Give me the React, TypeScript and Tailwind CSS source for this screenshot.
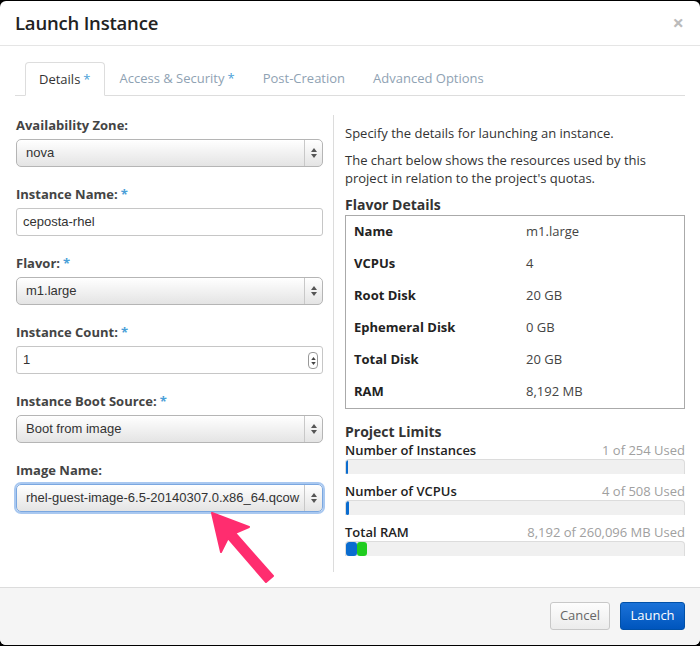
import React from "react";

const Star = () => <span className="text-[#4a9fd8] ml-[3px]">*</span>;

function SelectBox({ value, focused }: { value: string; focused?: boolean }) {
  return (
    <div
      className={
        "relative h-[28px] rounded-[5px] flex items-center bg-gradient-to-b from-[#ffffff] to-[#e4e4e4] " +
        (focused
          ? "border border-[#7aa7e0] shadow-[0_0_0_2px_#a9c8f0]"
          : "border border-[#b5b5b5] shadow-[inset_0_1px_0_#fff]")
      }
    >
      <span className="block w-full min-w-0 pl-[9px] pr-[22px] text-[13px] text-[#333] whitespace-nowrap overflow-hidden font-['Liberation_Sans',Arial,sans-serif]">
        <span className="block overflow-hidden">{value}</span>
      </span>
      <div className="absolute right-0 top-0 bottom-0 w-[18px] border-l border-[#c8c8c8] flex flex-col items-center justify-center gap-[2px]">
        <svg width="6" height="4" viewBox="0 0 6 4"><path d="M3 0 L6 4 L0 4 Z" fill="#555" /></svg>
        <svg width="6" height="4" viewBox="0 0 6 4"><path d="M0 0 L6 0 L3 4 Z" fill="#555" /></svg>
      </div>
    </div>
  );
}

function InputBox({ value, spinner }: { value: string; spinner?: boolean }) {
  return (
    <div className="relative h-[28px] rounded-[3px] border border-[#c6c6c6] bg-white flex items-center">
      <span className="pl-[6px] text-[13px] text-[#333] font-['Liberation_Sans',Arial,sans-serif]">{value}</span>
      {spinner && (
        <div className="absolute right-[4px] top-[5px] w-[10px] h-[17px] rounded-[4px] border border-[#999] flex flex-col items-center justify-center gap-[2px] bg-white">
          <svg width="5" height="3" viewBox="0 0 6 4"><path d="M3 0 L6 4 L0 4 Z" fill="#444" /></svg>
          <svg width="5" height="3" viewBox="0 0 6 4"><path d="M0 0 L6 0 L3 4 Z" fill="#444" /></svg>
        </div>
      )}
    </div>
  );
}

function Field({ label, req, children }: { label: string; req?: boolean; children: React.ReactNode }) {
  return (
    <div className="mb-[17px]">
      <div className="h-[20px] mb-[4px] text-[13px] font-bold text-[#444] leading-[20px]">
        {label}
        {req && <Star />}
      </div>
      {children}
    </div>
  );
}

function Bar({ label, used, fills }: { label: string; used: string; fills: { w: number; c: string }[] }) {
  return (
    <div className="mb-[8px]">
      <div className="flex justify-between h-[18px] leading-[18px] text-[13px]">
        <span className="font-semibold text-[#222]">{label}</span>
        <span className="text-[#a0a0a0]">{used}</span>
      </div>
      <div className="h-[15px] bg-[#f0f0f0] border-t border-x border-[#dcdcdc] rounded-t-[4px] flex overflow-hidden">
        {fills.map((f, i) => (
          <div key={i} className="h-full rounded-[3px]" style={{ width: f.w, backgroundColor: f.c }} />
        ))}
      </div>
    </div>
  );
}

export default function App() {
  const rows: [string, string][] = [
    ["Name", "m1.large"],
    ["VCPUs", "4"],
    ["Root Disk", "20 GB"],
    ["Ephemeral Disk", "0 GB"],
    ["Total Disk", "20 GB"],
    ["RAM", "8,192 MB"],
  ];
  return (
    <div className="w-[700px] h-[646px] bg-black pt-px font-['Open_Sans',sans-serif] relative overflow-hidden">
      <div className="h-[644px] bg-white rounded-[6px] flex flex-col overflow-hidden">
        {/* header */}
        <div className="h-[45px] border-b border-[#e5e5e5] flex items-center justify-between px-[15px] shrink-0">
          <h1 className="text-[18.5px] font-semibold text-[#222] tracking-[-0.2px]">Launch Instance</h1>
          <span className="text-[20px] text-[#bbb] font-bold leading-none mr-[1px]">×</span>
        </div>
        {/* body */}
        <div className="flex-1 px-[15px] pt-[16px] overflow-hidden">
          <div className="flex border-b border-[#ddd] h-[34px] pl-[10px]">
            <div className="px-[13px] mr-[2px] h-[34px] -mb-px border border-[#ddd] border-b-white bg-white rounded-t-[4px] flex items-center text-[13px] text-[#333] pt-[1px]">
              Details<Star />
            </div>
            <div className="px-[13px] mr-[2px] flex items-center text-[13px] text-[#8fa2b3] pt-[1px]">
              Access &amp; Security<Star />
            </div>
            <div className="px-[13px] mr-[2px] flex items-center text-[13px] text-[#8fa2b3] pt-[1px]">Post-Creation</div>
            <div className="px-[13px] mr-[2px] flex items-center text-[13px] text-[#8fa2b3] pt-[1px]">Advanced Options</div>
          </div>
          <div className="flex pt-[19px]">
            <div className="w-[308px] pl-[1px] shrink-0">
              <Field label="Availability Zone:">
                <SelectBox value="nova" />
              </Field>
              <Field label="Instance Name:" req>
                <InputBox value="ceposta-rhel" />
              </Field>
              <Field label="Flavor:" req>
                <SelectBox value="m1.large" />
              </Field>
              <Field label="Instance Count:" req>
                <InputBox value="1" spinner />
              </Field>
              <Field label="Instance Boot Source:" req>
                <SelectBox value="Boot from image" />
              </Field>
              <Field label="Image Name:">
                <SelectBox value="rhel-guest-image-6.5-20140307.0.x86_64.qcow2" focused />
              </Field>
            </div>
            <div className="w-px bg-[#dcdcdc] ml-[10px] h-[457px] shrink-0" />
            <div className="flex-1 pl-[11px]">
              <p className="text-[13px] text-[#333] leading-[18px] mb-[9px] mt-[9px]">
                Specify the details for launching an instance.
              </p>
              <p className="text-[13px] text-[#333] leading-[18px] mb-[9px] pr-[10px]">
                The chart below shows the resources used by this project in relation to the project's quotas.
              </p>
              <h3 className="text-[14px] font-bold text-[#333] leading-[18px]">Flavor Details</h3>
              <div className="border border-[#aaa] mt-[1px]">
                {rows.map(([k, v]) => (
                  <div key={k} className="h-[32px] flex items-center text-[13px]">
                    <span className="w-[180px] pl-[8px] font-bold text-[#222]">{k}</span>
                    <span className="text-[#444]">{v}</span>
                  </div>
                ))}
              </div>
              <h3 className="text-[14px] font-bold text-[#333] leading-[18px] mt-[14px]">Project Limits</h3>
              <Bar label="Number of Instances" used="1 of 254 Used" fills={[{ w: 2, c: "#0a6ccf" }]} />
              <Bar label="Number of VCPUs" used="4 of 508 Used" fills={[{ w: 3, c: "#0a6ccf" }]} />
              <Bar
                label="Total RAM"
                used="8,192 of 260,096 MB Used"
                fills={[
                  { w: 11, c: "#0a6ccf" },
                  { w: 10, c: "#1fcc1f" },
                ]}
              />
            </div>
          </div>
        </div>
        {/* footer */}
        <div className="h-[58px] border-t border-[#dcdcdc] bg-[#f5f5f5] flex items-center justify-end gap-[10px] px-[15px] shrink-0 pb-[2px]">
          <button className="h-[28px] w-[60px] rounded-[3px] border border-[#c8c8c8] bg-gradient-to-b from-[#fdfdfd] to-[#ececec] text-[13px] text-[#666]">
            Cancel
          </button>
          <button className="h-[28px] w-[65px] rounded-[3px] border border-[#0050a8] bg-gradient-to-b from-[#1a72d8] to-[#0055bd] text-[13px] text-white">
            Launch
          </button>
        </div>
      </div>
      <svg className="absolute left-0 top-0 pointer-events-none" width="700" height="646">
        <polygon
          points="212,513 249,527 235,533 273,576 266,582 228,538 221,552"
          fill="#ff2d6f"
          stroke="#ff2d6f"
          strokeWidth="2"
          strokeLinejoin="round"
        />
      </svg>
    </div>
  );
}
